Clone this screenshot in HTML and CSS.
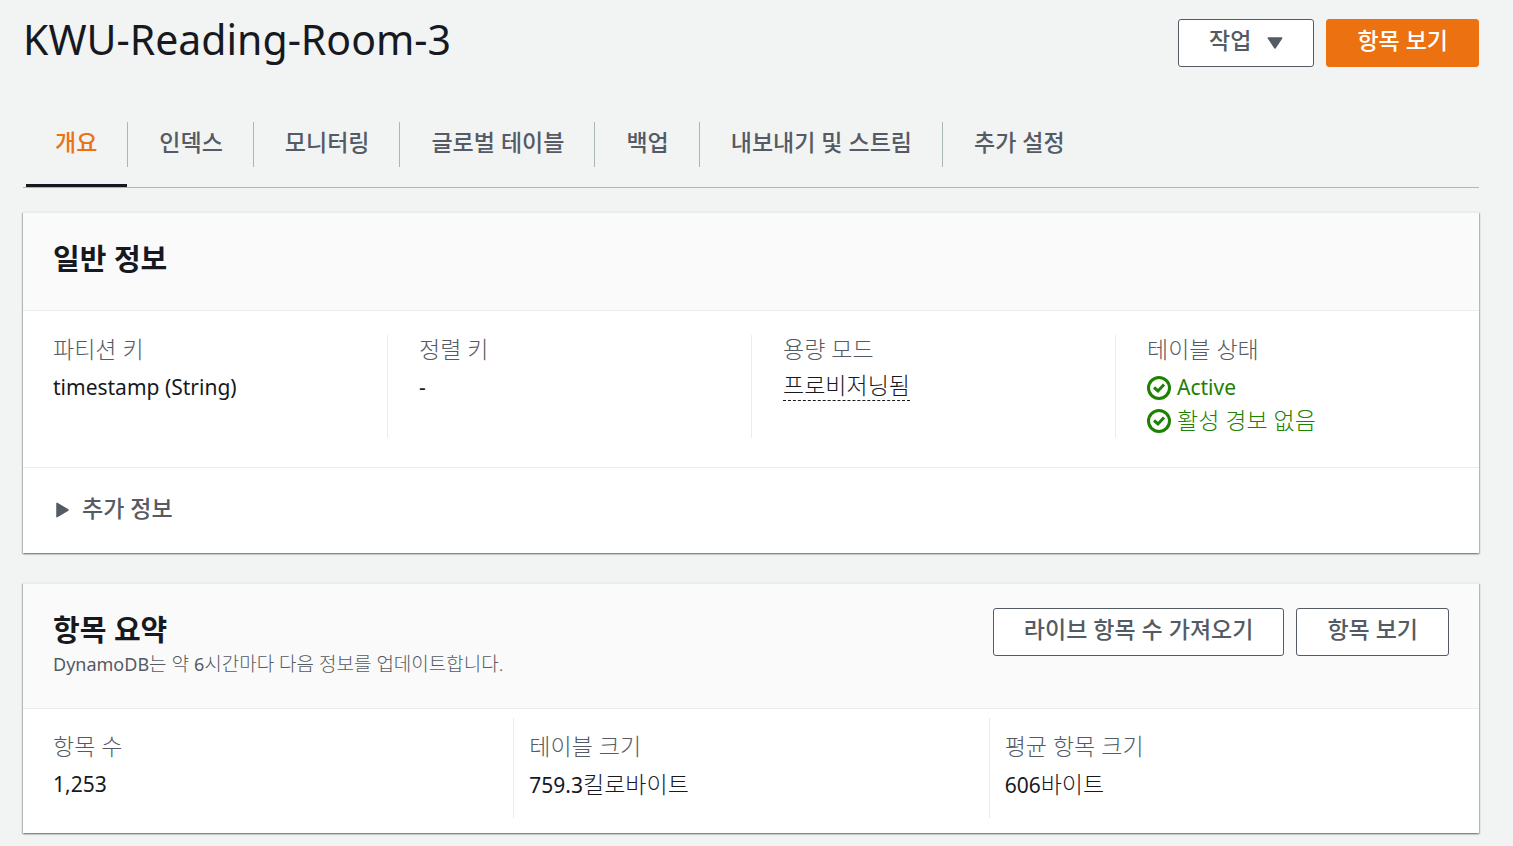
FILE: index.html
```html
<!DOCTYPE html>
<html lang="ko">
<head>
<meta charset="utf-8">
<meta name="viewport" content="width=device-width, initial-scale=1">
<title>KWU-Reading-Room-3</title>
<link rel="stylesheet" href="styles.css">
</head>
<body>
<main class="page">
  <header class="page-header">
    <h1 class="page-title">KWU-Reading-Room-3</h1>
    <div class="actions">
      <button class="button" type="button">작업
        <svg class="caret" viewBox="0 0 16 12" aria-hidden="true"><path d="M1.3 1h13.4L8 11z"/></svg>
      </button>
      <button class="button button-primary" type="button">항목 보기</button>
    </div>
  </header>

  <nav class="tabs">
    <a class="tab tab-active" href="#overview">개요</a>
    <a class="tab" href="#indexes">인덱스</a>
    <a class="tab" href="#monitoring">모니터링</a>
    <a class="tab" href="#global">글로벌 테이블</a>
    <a class="tab" href="#backups">백업</a>
    <a class="tab" href="#exports">내보내기 및 스트림</a>
    <a class="tab" href="#settings">추가 설정</a>
  </nav>

  <section class="card">
    <div class="card-header">
      <h2 class="card-title">일반 정보</h2>
    </div>
    <dl class="columns columns-four">
      <div class="column">
        <dt class="label">파티션 키</dt>
        <dd class="value latin">timestamp (String)</dd>
      </div>
      <div class="column">
        <dt class="label">정렬 키</dt>
        <dd class="value latin">-</dd>
      </div>
      <div class="column">
        <dt class="label">용량 모드</dt>
        <dd class="value"><button class="term" type="button">프로비저닝됨</button></dd>
      </div>
      <div class="column">
        <dt class="label">테이블 상태</dt>
        <dd class="value status latin">
          <svg class="check" viewBox="0 0 24 24" aria-hidden="true"><circle cx="12" cy="12" r="10.5"/><path d="M7 11.5l4 3.5 6-6.5"/></svg>
          Active
        </dd>
        <dd class="value status">
          <svg class="check" viewBox="0 0 24 24" aria-hidden="true"><circle cx="12" cy="12" r="10.5"/><path d="M7 11.5l4 3.5 6-6.5"/></svg>
          활성 경보 없음
        </dd>
      </div>
    </dl>
    <button class="expander" type="button">
      <svg class="expander-icon" viewBox="0 0 14 16" aria-hidden="true"><path d="M2 1.3v13.4L13 8z"/></svg>
      추가 정보
    </button>
  </section>

  <section class="card">
    <div class="card-header card-header-described">
      <div>
        <h2 class="card-title">항목 요약</h2>
        <p class="description"><span class="latin-small">DynamoDB</span>는 약 <span class="latin-small">6</span>시간마다 다음 정보를 업데이트합니다.</p>
      </div>
      <div class="actions">
        <button class="button" type="button">라이브 항목 수 가져오기</button>
        <button class="button" type="button">항목 보기</button>
      </div>
    </div>
    <dl class="columns columns-three">
      <div class="column">
        <dt class="label">항목 수</dt>
        <dd class="value latin">1,253</dd>
      </div>
      <div class="column">
        <dt class="label">테이블 크기</dt>
        <dd class="value"><span class="latin">759.3</span>킬로바이트</dd>
      </div>
      <div class="column">
        <dt class="label">평균 항목 크기</dt>
        <dd class="value"><span class="latin">606</span>바이트</dd>
      </div>
    </dl>
  </section>
</main>
</body>
</html>
```
FILE: styles.css
```css
* {
  box-sizing: border-box;
}

body {
  margin: 0;
  background: #f2f3f3;
  color: #16191f;
  font-family: "Noto Sans", "Noto Sans CJK KR", sans-serif;
  font-size: 23px;
  line-height: 32px;
}

h1, h2, p, dl, dd {
  margin: 0;
}

button {
  font: inherit;
  color: inherit;
  cursor: pointer;
}

.page {
  padding: 12px 34px 12px 23px;
}

.page-header {
  display: flex;
  justify-content: space-between;
  align-items: flex-start;
}

.page-title {
  font-size: 41px;
  font-weight: 400;
  line-height: 54px;
}

.actions {
  display: flex;
  gap: 12px;
}

.page-header .actions {
  padding-top: 7px;
}

.button {
  display: flex;
  align-items: center;
  gap: 16px;
  height: 48px;
  padding: 0 30px 6px;
  border: 1px solid #545b64;
  border-radius: 3px;
  background: #fff;
  color: #545b64;
  font-weight: 500;
  white-space: nowrap;
}

.button-primary {
  border-color: #ec7211;
  background: #ec7211;
  color: #fff;
}

.caret {
  width: 16px;
  height: 12px;
  margin-top: 6px;
  fill: #545b64;
  stroke: #545b64;
  stroke-width: 1.5;
  stroke-linejoin: round;
}

.tabs {
  display: flex;
  margin-top: 55px;
  padding-left: 3px;
  border-bottom: 1px solid #aab7b8;
}

.tab {
  position: relative;
  height: 45px;
  margin-bottom: 20px;
  padding: 4px 30px 4px 31px;
  border-right: 1px solid #aab7b8;
  color: #545b64;
  font-weight: 500;
  text-decoration: none;
  white-space: nowrap;
}

.tab:first-child {
  padding-left: 29px;
}

.tab:last-child {
  border-right: 0;
}

.tab-active {
  color: #ec7211;
}

.tab-active::after {
  content: "";
  position: absolute;
  left: 0;
  right: 0;
  bottom: -20px;
  height: 3px;
  background: #16191f;
}

.card {
  margin-top: 24px;
  border-top: 1px solid #eaeded;
  background: #fff;
  box-shadow: 0 1px 2px rgba(0, 28, 36, 0.4), 1px 1px 1px rgba(0, 28, 36, 0.15), -1px 1px 1px rgba(0, 28, 36, 0.15);
}

.card + .card {
  margin-top: 30px;
}

.card-header {
  display: flex;
  justify-content: space-between;
  align-items: flex-start;
  padding: 24px 30px 29px;
  border-bottom: 1px solid #eaeded;
  background: #fafafa;
}

.card-header-described {
  padding-bottom: 32px;
}

.card-title {
  font-size: 29px;
  line-height: 44px;
}

.description {
  color: #545b64;
  font-size: 19px;
  font-weight: 300;
  line-height: 24px;
}

.columns {
  display: grid;
}

.columns-four {
  grid-template-columns: repeat(4, 1fr);
  padding: 24px 0 29px;
}

.columns-three {
  grid-template-columns: repeat(3, 1fr);
  padding: 9px 15px 15px;
}

.column {
  min-height: 103px;
  border-left: 1px solid #eaeded;
}

.columns-four .column {
  padding-left: 31px;
}

.columns-three .column {
  min-height: 100px;
  padding: 14px 0 10px 15px;
}

.columns .column:first-child {
  border-left: 0;
}

.columns-four .column:first-child {
  padding-left: 30px;
}

.label {
  margin-bottom: 8px;
  color: #545b64;
  font-weight: 300;
  line-height: 28px;
}

.value {
  font-weight: 300;
  line-height: 33px;
}

.latin {
  font-size: 21px;
  font-weight: 400;
}

.latin-small {
  font-size: 18px;
  font-weight: 400;
  line-height: 1;
}

.term {
  display: block;
  padding: 0;
  border: 0;
  border-bottom: 1px dashed #16191f;
  background: none;
  line-height: 29px;
}

.status {
  display: flex;
  align-items: center;
  gap: 6px;
  color: #1d8102;
}

.check {
  width: 24px;
  height: 24px;
  fill: none;
  stroke: #1d8102;
  stroke-width: 3;
}

.expander {
  display: flex;
  align-items: center;
  gap: 13px;
  width: 100%;
  padding: 24px 32px 29px;
  border: 0;
  border-top: 1px solid #eaeded;
  background: none;
  color: #545b64;
  font-weight: 500;
}

.expander-icon {
  width: 14px;
  height: 16px;
  margin-top: 4px;
  fill: #545b64;
  stroke: #545b64;
  stroke-width: 1.5;
  stroke-linejoin: round;
}
```
